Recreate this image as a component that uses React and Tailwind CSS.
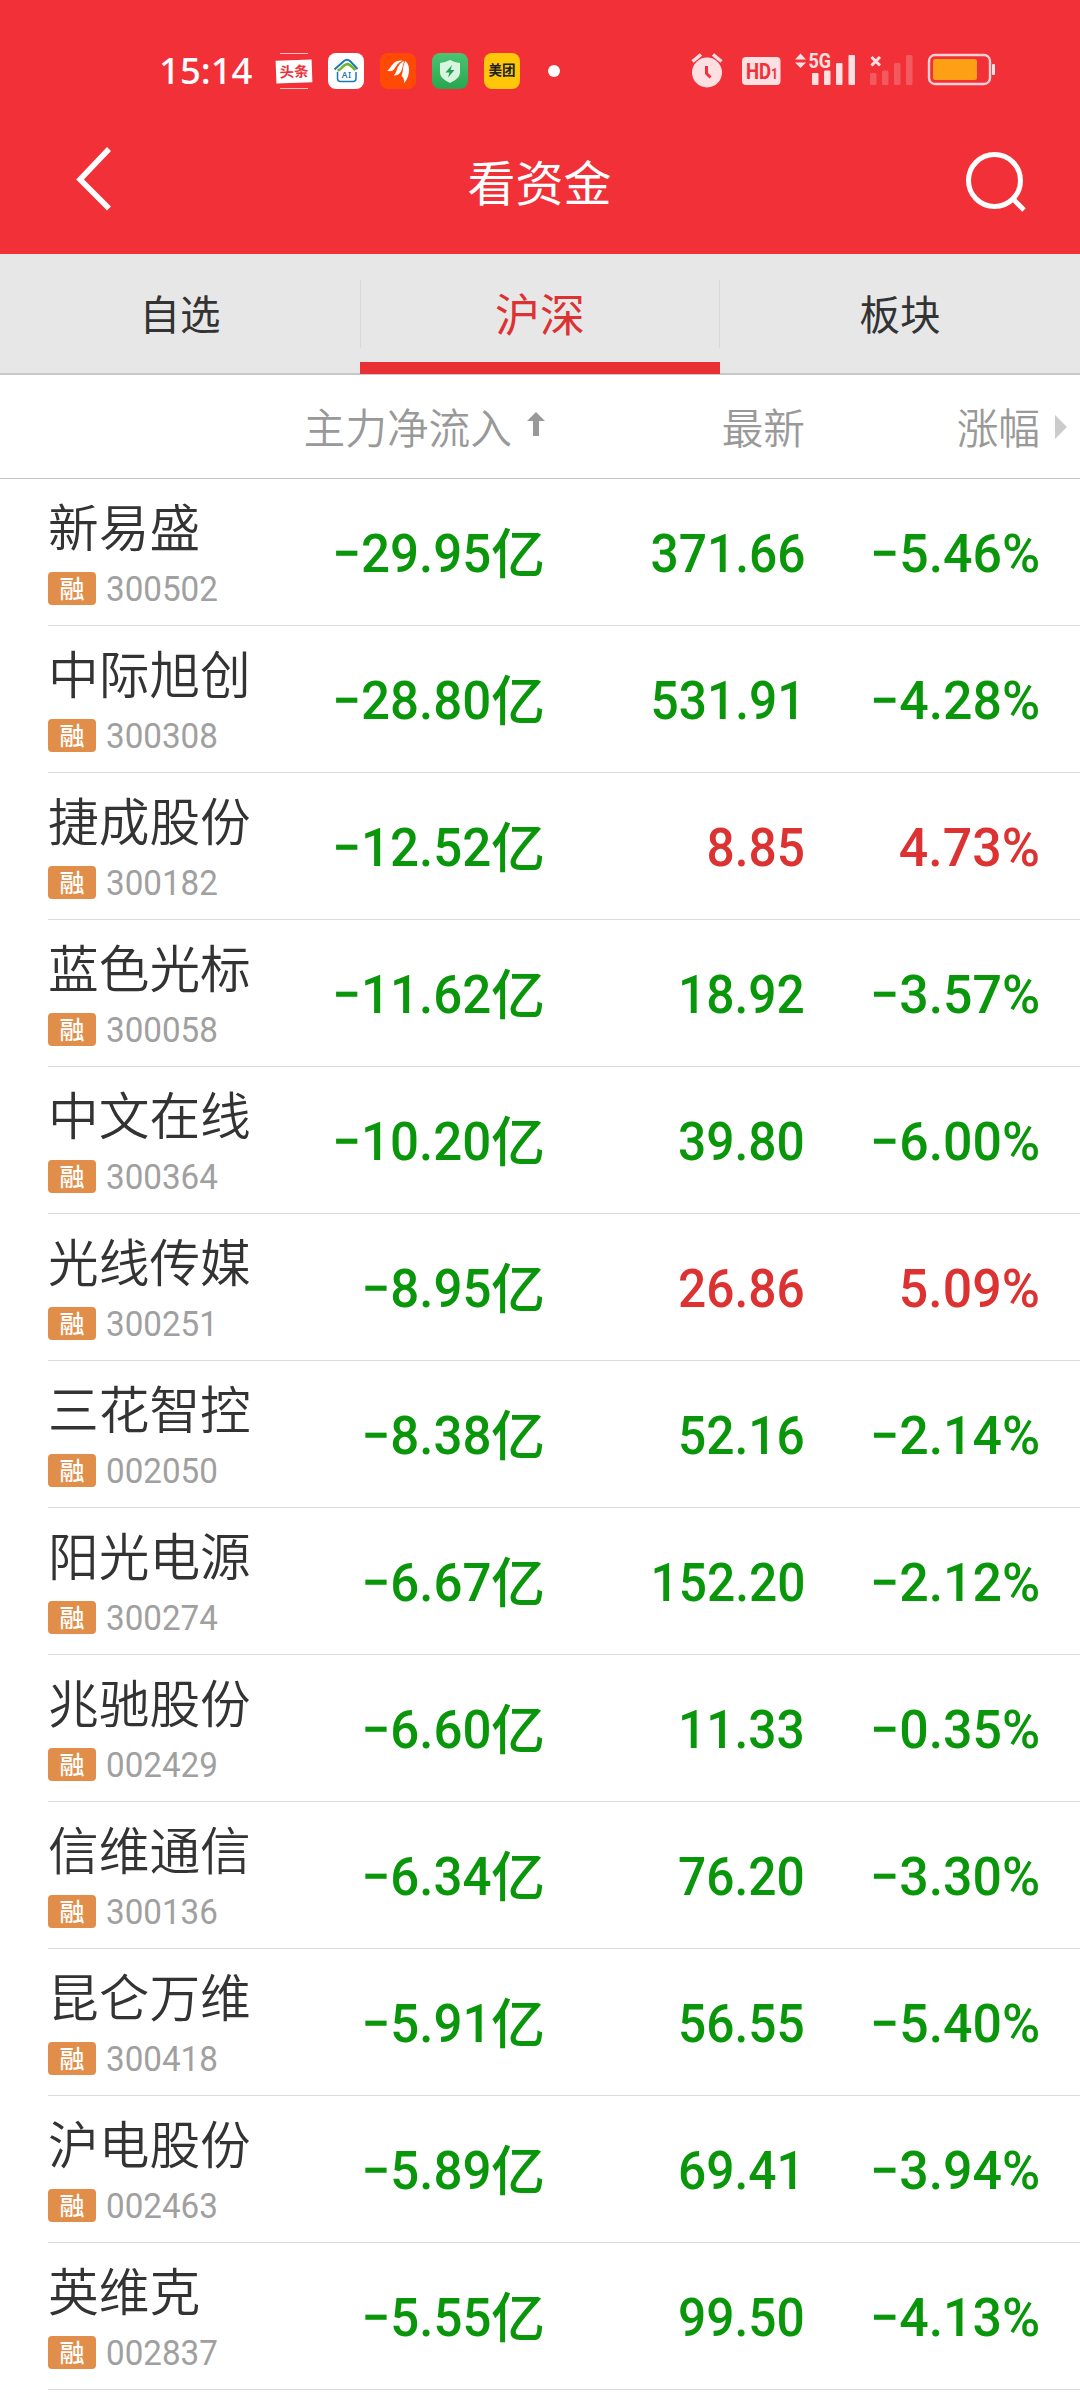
import React from "react";

const stocks = [
  { name: "新易盛", code: "300502", flow: "−29.95", price: "371.66", change: "−5.46%" },
  { name: "中际旭创", code: "300308", flow: "−28.80", price: "531.91", change: "−4.28%" },
  { name: "捷成股份", code: "300182", flow: "−12.52", price: "8.85", change: "4.73%" },
  { name: "蓝色光标", code: "300058", flow: "−11.62", price: "18.92", change: "−3.57%" },
  { name: "中文在线", code: "300364", flow: "−10.20", price: "39.80", change: "−6.00%" },
  { name: "光线传媒", code: "300251", flow: "−8.95", price: "26.86", change: "5.09%" },
  { name: "三花智控", code: "002050", flow: "−8.38", price: "52.16", change: "−2.14%" },
  { name: "阳光电源", code: "300274", flow: "−6.67", price: "152.20", change: "−2.12%" },
  { name: "兆驰股份", code: "002429", flow: "−6.60", price: "11.33", change: "−0.35%" },
  { name: "信维通信", code: "300136", flow: "−6.34", price: "76.20", change: "−3.30%" },
  { name: "昆仑万维", code: "300418", flow: "−5.91", price: "56.55", change: "−5.40%" },
  { name: "沪电股份", code: "002463", flow: "−5.89", price: "69.41", change: "−3.94%" },
  { name: "英维克", code: "002837", flow: "−5.55", price: "99.50", change: "−4.13%" },
];

const AppIcons = () => (
  <div className="flex items-center gap-4">
    {/* Toutiao */}
    <div className="flex h-9 w-9 flex-col items-center justify-between">
      <div className="h-px w-7 bg-white/70" />
      <div className="flex h-[23px] w-9 -rotate-2 items-center justify-center bg-white text-[14.5px] font-bold leading-none text-[#ee3038]">
        头条
      </div>
      <div className="h-px w-7 bg-white/70" />
    </div>
    {/* AI home */}
    <div className="h-9 w-9 rounded-lg bg-white">
      <svg viewBox="0 0 36 36" className="h-9 w-9" fill="none">
        <path d="M6.500 16.500L16 8q3-2.500 6 0l7.500 8" stroke="#1d78b8" strokeWidth="2" />
        <path d="M9.500 17.500c5-1 5-6.500 10.500-6.500 3 1 5 4 7.500 6" stroke="#6cb52d" strokeWidth="2.500" />
        <path d="M9.500 19v6.500q0 3 3 3h12.500q3 0 3-3v-6.500" stroke="#1d78b8" strokeWidth="1.500" />
        <text x="18.700" y="25" textAnchor="middle" fontSize="8.500" fontWeight="600" letterSpacing="0.5" fill="#1d78b8">
          AI
        </text>
      </svg>
    </div>
    {/* Feather */}
    <div className="h-9 w-9 rounded-lg bg-[#ff4a05]">
      <svg viewBox="0 0 36 36" className="h-9 w-9" fill="#fff">
        <path d="M7 17.500c3-1 3.500-4.500 7-7.500C17 7.500 20.500 7 23 8c-4 .5-6 4-8 7-2 3-5 4.300-8 2.500z" />
        <path d="M13.500 22.500c3-2.500 3-6 5-9.500 1.500-2.500 3.500-4.500 6-5-2 3-1.500 7-3.500 10.500-1.700 3-4.500 4.500-7.500 4z" />
        <path d="M21.500 23c2-4.500 1-11 4-15 3 2.500 4 6.500 3.300 11.500-.5 4.500-2.300 8-4.800 10.500.5-3-.5-5.500-2.500-7z" />
      </svg>
    </div>
    {/* Security */}
    <div className="h-9 w-9 rounded-lg bg-gradient-to-b from-[#4cc472] to-[#27a64f]">
      <svg viewBox="0 0 36 36" className="h-9 w-9">
        <path d="M18 7q4.500 2.500 10 3v9c0 5-4 8-10 11-6-3-10-6-10-11v-9q5.500-.5 10-3z" fill="#d8f5e0" />
        <path d="M20 12l-6.500 7.500h4l-1.500 5 6.500-7.500h-4z" fill="#22a052" />
      </svg>
    </div>
    {/* Meituan */}
    <div className="flex h-9 w-9 items-center justify-center rounded-lg bg-[#ffc60a] text-[13.5px] font-bold leading-none text-[#222]">
      美团
    </div>
    <div className="ml-[12px] h-3 w-3 rounded-full bg-white" />
  </div>
);

const SystemIcons = () => (
  <svg viewBox="0 0 310 40" className="h-10 w-[310px] overflow-visible font-[Roboto]" fill="#ffe0e2">
    {/* Alarm */}
    <circle cx="17" cy="21.500" r="15" />
    <path d="M2.500 10.500l8.500-7M31.500 10.500l-8.500-7" stroke="#ffe0e2" strokeWidth="3.500" />
    <path d="M16.500 15v7.500l4 4" stroke="#f13037" strokeWidth="3" fill="none" />
    {/* HD1 */}
    <rect x="52" y="6" width="38.500" height="28" rx="4" />
    <text x="56" y="28" fontSize="21.500" fontWeight="700" fill="#f13037" textLength="32" lengthAdjust="spacingAndGlyphs">
      HD<tspan fontSize="14">1</tspan>
    </text>
    {/* 5G signal */}
    <path d="M105 8.500l5.500-6 5.500 6zM105 11.500l5.500 5.500 5.500-5.500z" />
    <text x="118.500" y="16.500" fontSize="20" fontWeight="700" textLength="22.500" lengthAdjust="spacingAndGlyphs">
      5G
    </text>
    <rect x="122" y="22" width="6.500" height="12" rx="1" />
    <rect x="134" y="19.500" width="6.500" height="14.500" rx="1" />
    <rect x="146" y="12" width="6.500" height="22" rx="1" />
    <rect x="158.500" y="4" width="6.500" height="30" rx="1" />
    {/* No signal */}
    <path d="M181.500 6l8.500 8.500M190 6l-8.500 8.500" stroke="#ffe0e2" strokeWidth="3" />
    <g fill="#fff" opacity="0.2">
      <rect x="180" y="22" width="6.500" height="12" rx="1.500" />
      <rect x="192" y="19.500" width="6.500" height="14.500" rx="1.500" />
      <rect x="204" y="12" width="6.500" height="22" rx="1.500" />
      <rect x="216" y="4" width="6.500" height="30" rx="1.500" />
    </g>
    {/* Battery */}
    <rect x="239" y="4" width="61" height="29" rx="6" fill="none" stroke="#ffd0d4" strokeWidth="2.400" />
    <rect x="243" y="8" width="44" height="21" rx="2.500" fill="#fda015" />
    <rect x="302" y="13" width="3" height="11" rx="1" />
  </svg>
);

const StockRow = ({ stock }) => {
  const color = stock.change.startsWith("−") ? "text-[#0a960a]" : "text-[#dc3232]";

  return (
    <li className="ml-12 flex h-[147px] border-b border-[#dcdcdc] pr-10">
      <div className="w-[240px]">
        <div className="mt-[20px] h-[58px] whitespace-nowrap text-[50.7px] font-[350] leading-[58px] text-[#333]">
          {stock.name}
        </div>
        <div className="mt-[14px] flex items-center">
          <span className="flex h-[33px] w-12 items-center justify-center rounded-[4px] bg-[#e18e4b] text-[25px] font-medium leading-none text-white">
            融
          </span>
          <span className="ml-[10px] origin-left scale-x-[0.935] pt-[2px] font-[Roboto] text-[35.5px] leading-[33px] text-[#a0a0a0]">
            {stock.code}
          </span>
        </div>
      </div>
      <div className="flex w-[257px] items-center justify-end pt-[2px] font-medium text-[#0a960a]">
        <span className="origin-right scale-x-[0.945] font-[Roboto] text-[54px]">{stock.flow}</span>
        <span className="text-[54px] leading-none">亿</span>
      </div>
      <div className={`flex w-[260px] items-center justify-end pt-[2px] font-medium ${color}`}>
        <span className="origin-right scale-x-[0.92] font-[Roboto] text-[54px]">{stock.price}</span>
      </div>
      <div className={`flex flex-1 items-center justify-end pt-[2px] font-medium ${color}`}>
        <span className="origin-right scale-x-[0.96] font-[Roboto] text-[54px]">{stock.change}</span>
      </div>
    </li>
  );
};

const App = () => {
  return (
    <div className="h-[2400px] w-[1080px] overflow-hidden bg-white font-['Noto_Sans','Noto_Sans_CJK_SC',sans-serif]">
      <header className="h-[254px] bg-[#f13037] text-white">
        <div className="flex h-[110px] items-center justify-between pl-[159px] pr-[80px] pt-[32px]">
          <div className="flex items-center">
            <span className="w-[117px] pb-[2px] text-[36.5px] font-medium leading-[39px]">15:14</span>
            <AppIcons />
          </div>
          <SystemIcons />
        </div>
        <div className="flex h-[144px] items-start justify-between pl-[71px] pr-[52px]">
          <svg viewBox="0 0 44 70" className="mt-[34px] h-[70px] w-[44px]" fill="none" stroke="#fff" strokeWidth="5.500">
            <path d="M38 5L9 35.500L38 64.500" />
          </svg>
          <h1 className="mt-[38px] text-[48px] font-normal leading-[70px]">看资金</h1>
          <svg viewBox="0 0 64 64" className="mt-[40px] h-16 w-16" fill="none" stroke="#fff" strokeWidth="5">
            <circle cx="30.500" cy="30.500" r="26" />
            <path d="M49 49l11 11" />
          </svg>
        </div>
      </header>

      <nav className="grid h-[121px] grid-cols-3 border-b-2 border-[#c8c8c8] bg-[#e7e7e7] text-[40.5px] text-[#333]">
        <div className="flex items-center justify-center pt-[3px]">自选</div>
        <div className="relative flex items-center justify-center pt-[3px] text-[45px] text-[#dc3232]">
          <span className="absolute left-0 top-[26px] h-[68px] w-px bg-[#d8d8d8]" />
          沪深
          <span className="absolute right-0 top-[26px] h-[68px] w-px bg-[#d8d8d8]" />
          <span className="absolute -bottom-px left-0 h-3 w-full bg-[#e93034]" />
        </div>
        <div className="flex items-center justify-center pt-[3px]">板块</div>
      </nav>

      <div className="flex h-[104px] items-center border-b border-[#c4c4c4] text-[41.7px] font-[350] text-[#999]">
        <div className="flex w-[545px] items-center justify-end">
          <span className="pt-1">主力净流入</span>
          <svg viewBox="0 0 18 24" className="mb-1 ml-[15px] h-6 w-[18px]" fill="#999">
            <path d="M9 0l9 9h-6v15h-6v-15h-6z" />
          </svg>
        </div>
        <div className="w-[260px] pt-1 text-right">最新</div>
        <div className="w-[235px] pt-1 text-right">涨幅</div>
        <svg viewBox="0 0 12 24" className="ml-[15px] h-6 w-3" fill="#ccc">
          <path d="M0 0l12 12l-12 12z" />
        </svg>
      </div>

      <ul>
        {stocks.map((stock) => (
          <StockRow key={stock.code} stock={stock} />
        ))}
      </ul>
    </div>
  );
};

export default App;
